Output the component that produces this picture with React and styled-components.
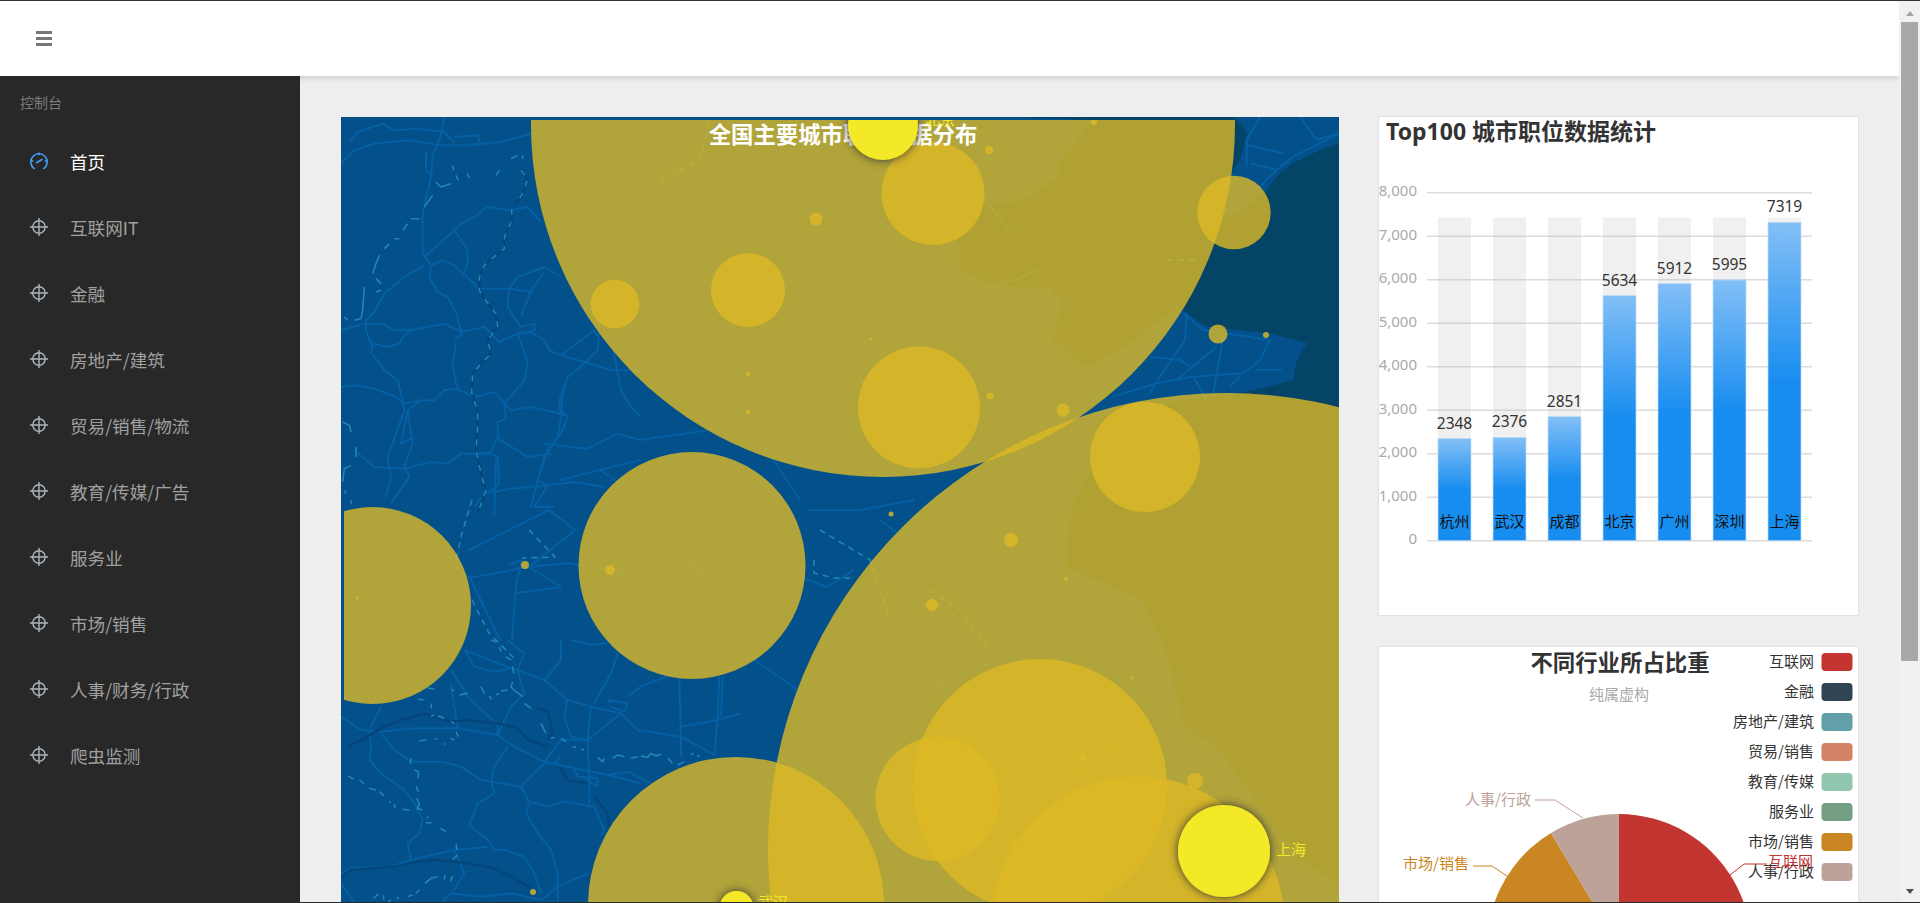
import React from 'react';
import styled, { createGlobalStyle } from 'styled-components';

const cjk = '"Noto Sans CJK SC", "Noto Sans", sans-serif';

const GlobalStyle = createGlobalStyle`
  html, body {
    margin: 0;
    height: 100%;
    overflow: hidden;
    background: #eee;
    font-family: ${cjk};
  }
`;

const Page = styled.div`
  display: flex;
  height: 903px;
  box-sizing: border-box;
  overflow: hidden;
  border-top: 1px solid #333;
  border-bottom: 1px solid #2a2a2a;
`;

const Content = styled.div`
  flex: 1;
  min-width: 0;
  display: flex;
  flex-direction: column;
`;

const Header = styled.header`
  flex: 0 0 75px;
  display: flex;
  align-items: center;
  padding-left: 36px;
  background: #fff;
  box-shadow: 0 2px 6px rgba(0, 0, 0, 0.15);
  position: relative;
  z-index: 2;
`;

const Body = styled.div`
  flex: 1;
  min-height: 0;
  display: flex;
`;

const Sidebar = styled.nav`
  flex: 0 0 300px;
  background: #282828;
  position: relative;
  z-index: 3;
`;

const SideTitle = styled.div`
  padding: 16px 0 0 20px;
  height: 36px;
  font-size: 14px;
  line-height: 20px;
  color: #7d7d7d;
`;

const MenuItem = styled.div`
  height: 66px;
  display: flex;
  align-items: center;
  padding-left: 30px;
  gap: 22px;
  font-size: 17.6px;
  color: ${props => (props.$active ? '#fff' : '#a0a0a0')};
  svg {
    flex: none;
    color: ${props => (props.$active ? '#409eff' : '#aab4bd')};
  }
`;

const Main = styled.main`
  flex: 1;
  min-width: 0;
  display: flex;
  gap: 39px;
  padding: 41px 40px 0 41px;
  overflow: hidden;
`;

const MapPanel = styled.div`
  flex: 0 0 998px;
  height: 786px;
`;

const ChartSvg = styled.svg`
  display: block;
  width: 100%;
  height: 100%;
`;

const Column = styled.div`
  flex: 0 0 481px;
  margin-top: -1px;
  display: flex;
  flex-direction: column;
  gap: 30px;
`;

const Card = styled.section`
  flex: none;
  height: ${props => props.$height}px;
  box-sizing: border-box;
  background: #fff;
  border: 1px solid #e0e2ea;
`;

const Scrollbar = styled.div`
  flex: 0 0 17px;
  display: flex;
  flex-direction: column;
  padding: 0 2px;
  background: #f1f1f1;
  position: relative;
  z-index: 4;
`;

const ScrollTop = styled.div`
  height: 21px;
  display: flex;
  align-items: center;
  justify-content: center;
  &::before {
    content: '';
    border: 4.5px solid transparent;
    border-top: 0;
    border-bottom: 5px solid #a3a3a3;
    margin-top: 4px;
  }
`;

const ScrollThumb = styled.div`
  height: 639px;
  background: #a8a8a8;
`;

const ScrollBottom = styled.div`
  margin-top: auto;
  height: 21px;
  display: flex;
  align-items: center;
  justify-content: center;
  &::before {
    content: '';
    border: 4.5px solid transparent;
    border-bottom: 0;
    border-top: 5px solid #505050;
  }
`;

const MapTitle = styled.text`
  font-family: ${cjk};
  font-size: 22.4px;
  font-weight: 700;
  fill: #fff;
  text-anchor: middle;
`;

const CityLabel = styled.text`
  font-family: ${cjk};
  font-size: 15px;
  fill: #f4e925;
`;

const CardTitle = styled.text`
  font-family: "Noto Sans", ${cjk};
  font-size: ${props => props.$size || 23}px;
  font-weight: 700;
  fill: #333;
  text-anchor: ${props => props.$anchor || 'start'};
`;

const AxisLabel = styled.text`
  font-family: "Noto Sans", ${cjk};
  font-size: 15px;
  fill: #aaa;
  text-anchor: end;
`;

const BarValue = styled.text`
  font-family: "Noto Sans", sans-serif;
  font-size: 15.5px;
  fill: #333;
  text-anchor: middle;
`;

const BarName = styled.text`
  font-family: ${cjk};
  font-size: 15px;
  fill: #111;
  text-anchor: middle;
`;

const SubTitle = styled.text`
  font-family: ${cjk};
  font-size: 15px;
  fill: #aaa;
  text-anchor: middle;
`;

const LegendLabel = styled.text`
  font-family: ${cjk};
  font-size: 15px;
  fill: #333;
  text-anchor: end;
`;

const PieLabel = styled.text`
  font-family: ${cjk};
  font-size: 15px;
  fill: ${props => props.$color};
`;

const menu = ['互联网IT', '金融', '房地产/建筑', '贸易/销售/物流', '教育/传媒/广告', '服务业', '市场/销售', '人事/财务/行政', '爬虫监测'];

const sea = 'M1339,143 L1320,150 L1293,163 L1280,173 L1267,190 L1247,207 L1230,217 L1222,218 L1225,180 L1240,160 L1247,133 L1235,117 L1010,117 L1093,120 L1077,140 L1057,167 L1060,177 L1017,203 L955,200 L960,270 L1000,287 L1050,287 L1063,303 L1053,340 L1087,367 L1123,347 L1177,307 L1207,327 L1267,333 L1307,343 L1297,360 L1293,380 L1267,387 L1240,393 L1180,400 L1120,420 L1075,500 L1068,533 L1066,567 L1142,600 L1166,650 L1185,727 L1219,750 L1249,790 L1279,833 L1312,867 L1339,885 Z';

// traced from the upper left of the map, 3x
const northWestRoads = [
  'M0,140 L40,100 L100,80 L200,70 L300,85 L380,85 L480,75 L570,50 L650,40',
  'M25,75 L50,45 L125,20 L160,40 L230,35 L310,45 L340,75',
  'M310,0 L295,70 L275,115 L270,180 L245,290 L245,410 L270,445',
  'M255,105 L255,160 L275,175',
  'M340,60 L410,55 L415,75',
  'M250,420 L340,340 L360,320 L400,300 L440,270 L510,280 L560,270 L600,315',
  'M340,340 L380,400 L380,440 L365,475',
  'M250,445 L190,480 L130,530 L100,585 L75,610 L75,640 L95,690 L90,705 L130,760 L170,790 L185,850',
  'M0,640 L70,620 L130,622 L160,640 L210,640 L310,620 L360,645 L430,630 L475,675 L530,650 L570,645 L610,670 L625,700 L660,715 L730,735 L810,760 L900,760',
  'M95,680 L140,690 L175,680 L190,655 L210,640',
  'M270,445 L305,430 L340,445 L415,515 L505,515 L575,525',
  'M270,445 L265,480 L290,525 L320,540 L345,585 L360,645',
  'M345,675 L335,740 L345,800 L355,825 M365,650 L340,670',
  'M530,650 L560,735 L550,790 L490,860 L495,905 L470,915 L470,960 L450,1005 L400,1010',
  'M505,515 L500,570 L540,630 L580,620 L580,640 L530,650',
  'M505,515 L530,480 L610,450 L660,480 M540,600 L570,520 L610,465',
  'M660,715 L760,640 L770,660 M730,740 L770,700 L775,640',
  'M730,740 L680,780 L655,850 L660,900 L650,960 L610,1020 L590,1090 L570,1170',
  'M670,800 L660,880 L680,900 L660,950 L620,1000 L600,1060',
  'M0,810 L40,805 L100,815 L165,840 L190,860 L240,850 L280,850 L310,820 L345,815 L400,840 L460,825 L490,860 L510,880 L570,870 L640,885 L670,895',
  'M185,850 L190,880 L140,1020 L150,1080 L135,1140',
  'M200,880 L215,980 L190,1050 L205,1080 L150,1160',
  'M240,850 L200,880 L180,980 L210,965',
  'M40,1000 L100,1050 L190,1055 L270,1035 L320,1040 L360,1010 L450,1010 L470,1020 L475,1100 L440,1130',
  'M470,965 L560,1020 L630,1010',
  'M610,980 L740,995 L830,950 L900,970',
  'M400,1170 L430,1130 L510,1115 L620,1105 L700,1095 L790,1110',
  'M810,660 L840,820 L870,870 L900,900',
  'M590,1090 L620,1105 L580,1170 L640,1170 M465,1030 L460,1200',
  'M620,300 L700,240 L760,230 L860,270 L900,250 M640,100 L720,140 L780,120 L900,160 M700,420 L800,380 L900,400',
];

const northWestBorder = 'M540,160 L560,185 L548,225 L525,260 M512,275 L513,295 L510,315 L490,360 L490,395 L470,410 L430,445 L415,480 L415,520 L430,545 L465,590 L470,630 L440,670 L450,710 L420,740 L395,770 L392,825 L410,885 L410,930 L405,1000 L420,1070 L435,1120 L410,1190';

const northWestDashes = [
  'M285,195 L300,210 L330,200 M275,235 L250,270 M235,305 L210,305 M200,320 L185,340 M175,365 L160,365 M145,380 L130,395 M115,415 L105,440 L95,470 M105,485 L120,500 M120,520 L105,525 M70,510 L65,580 L60,605 L40,610 M20,610 L10,600',
  'M335,145 L338,160 M345,175 L352,190 M378,170 L385,182 M475,160 L465,175 M510,125 L530,115 M545,115 L545,125',
  'M5,915 L25,925 L30,945 M45,990 L45,1020 M30,1045 L10,1055 L5,1095 M10,1120 L15,1130 M30,1150 L30,1160',
];

// traced from the lower left of the map, 3x
const southWestRoads = [
  'M370,30 L500,80 L610,120 L680,180 L750,200 L840,220 L890,270 L1020,290 L1120,345',
  'M0,230 L60,270 L120,275 L220,265 L350,265 L470,285 L520,320 L610,365 L700,385 L800,405 L900,430',
  'M85,270 L90,320 L85,360 L120,400 L190,450 L220,490 L245,540 L235,580 L200,610 L210,660',
  'M120,280 L160,330 L210,365 L300,365 L360,380 L420,420 L540,440 L610,370',
  'M540,440 L565,485 L620,500 L670,485 L760,500 L790,570 L780,590',
  'M565,490 L555,520 L590,580 L630,630 L650,700 L650,789',
  'M450,420 L460,460 L410,490 L385,555 L440,600 L460,630 L490,630 L550,650 L580,700 L600,760',
  'M610,365 L660,300 L740,300 L840,220',
  'M500,320 L460,380 L450,425',
  'M470,250 L470,285 L510,200 L550,160 L530,90 L550,40 L500,0',
  'M330,90 L380,170 L470,255',
  'M370,30 L400,80 L460,95 L510,85',
  'M610,120 L660,60 L660,0 M690,0 L750,15 L800,10',
  'M680,180 L670,230 L690,290 L740,300',
  'M760,190 L810,100 L830,40 M750,200 L740,300 L745,420 L745,490',
  'M810,190 L800,180 L860,190 L850,215 L810,200',
  'M860,170 L900,140 L1000,100 L1020,90 M1015,110 L1020,290 L1020,350 M1020,260 L1130,240 L1200,220 M1135,110 L1130,240 L1120,340 M1145,110 L1140,230',
  'M0,700 L30,685 L150,680 L210,660 L340,630 L440,620',
  'M0,730 L40,789 M300,789 L330,760 L420,770 L510,760 L600,780 L650,740 L740,700',
  'M340,630 L370,700 L340,750',
  'M700,385 L710,410 L770,415 L770,440 L735,420 M660,350 L640,370 L610,370 M800,405 L860,395 L930,430',
  'M120,200 L90,260 M350,265 L330,130',
];

const southWestRivers = [
  'M20,320 L70,295 L120,265 L180,240 L250,220 L330,245 L380,240 L470,250 L530,265 L560,300 L620,320',
  'M590,205 L620,215 L635,280 L620,300',
  'M655,380 L680,420 L740,430 M760,470 L800,520 L805,560',
  'M0,710 L30,690 L160,680 L230,665 L290,660 L380,670 L460,685 L520,715 L570,745',
];

const southWestDashes = [
  'M450,0 L465,5 M475,20 L480,35 M495,50 L510,60 M515,80 L518,100 M515,125 L510,140 L525,155 L545,170 M550,190 L570,205 M600,250 L615,280 M630,295 L640,292 M660,295 L675,305 M695,320 L705,322 M720,330 L730,328 M770,352 L785,365 L790,355 M815,355 L830,345 L850,350 M870,355 L890,350 M900,348 L920,352 L930,340 L945,348 L960,342 M980,355 L995,370 M1010,375 L1030,365 M1050,345 L1058,340 M1070,345 L1075,352',
  'M260,143 L280,148 M330,148 L340,152 M355,165 L380,160 M420,140 L430,160 M445,168 L452,178 M465,165 L475,160 M480,153 L500,150',
  'M230,178 L248,180 M272,190 L270,205 M270,228 L280,225 M290,228 L310,235 M330,245 L340,250 M345,275 L352,290 M328,295 L340,300 M235,302 L255,300 M280,298 L288,296 M310,312 L315,312',
  'M210,355 L208,372 M220,390 L232,395 L232,415 M225,440 L232,455 M228,475 L235,495 L228,505 L245,510 M185,508 L205,510 M160,492 L162,505 M145,485 L150,488 M130,468 L115,455 M105,450 L85,445 M70,432 L55,420 M38,418 L22,408 M258,530 L262,535 M255,548 L272,548 M298,565 L315,575 M345,612 L348,630 M350,645 L335,658 M290,710 L270,715 L252,730 M312,705 L310,718 M335,708 L328,725 M235,750 L225,760 M215,765 L200,770 M170,770 L170,778 M128,765 L128,780 M112,762 L98,775 M150,780 L142,785',
];

// middle band and the parts that show through the big circles, page coordinates
const middleRoads = [
  'M516,593 L561,587 L529,567 L469,578',
  'M529,567 L569,563 L609,570 L701,570 L754,560',
  'M469,550 L549,510 L575,530 L529,567',
  'M509,565 L522,560 L516,585 L512,640',
  'M754,560 L827,587 L854,570 M807,510 L861,510 L914,500',
  'M754,660 L794,687 L821,713 L861,717',
  'M344,530 L420,540 L470,578 L500,640',
  'M600,540 L640,600 L700,640 M640,520 L690,560 L730,640',
  'M600,470 L660,510 L700,570 M560,480 L640,460',
  'M660,300 L720,380 L760,440 L800,500',
  'M730,350 L810,400 L860,380 L950,420 L1000,370',
  'M640,440 L780,420 L820,450 L900,440',
  'M770,120 L860,180 L950,160 L1010,230',
  'M680,220 L760,200 L840,260 L960,300 L1040,270',
  'M880,520 L960,580 L1030,560 L1090,640 L1150,680',
  'M820,660 L900,640 L980,720 L1060,700',
  'M890,760 L940,680 L1000,660 L1040,760 L1120,800',
  'M800,860 L880,820 L960,860 L1080,880',
];

const middleDashes = [
  'M472,500 L462,533 L456,560 M472,600 L489,633 L516,660',
  'M529,530 L555,557 L522,558 M814,560 L814,573 L834,578 L854,578',
  'M660,180 L700,160 L710,120 M820,530 L870,560 L890,620 M930,590 L960,610 L990,650',
  'M1167,260 L1197,260',
];

const peninsulaRoads = [
  'M1017,100 L940,140 L880,170 L830,210 L780,260 L720,300 L680,330',
  'M780,50 L740,120 L740,200 M740,135 L850,160 M900,50 L950,120 L1017,100 M750,190 L830,210',
  'M550,640 L610,690 L810,720 L780,780 L730,820 L580,830 L470,850 L340,890',
  'M560,640 L555,720 L480,830 L450,880 M650,740 L530,840 M668,720 L640,880 M720,830 L690,860 M580,830 L620,900 M450,770 L540,780 L570,800 M770,810 L845,810',
];

const bubbles = [
  [883, 125, 352], [1226, 851, 458], [372.5, 605.5, 98.5], [692, 565.5, 113.5], [736, 905, 148],
  [1040, 786, 127], [937.5, 799, 62], [1138, 923, 146.5], [933, 193.5, 51.5], [1234, 212.5, 36.7],
  [748, 290, 37], [615, 304, 24.3], [919, 407.5, 61], [1145, 457, 55],
  [1218, 334, 9.5], [1266, 335, 3], [1063, 410, 6.5], [1094, 122, 3], [816, 219, 6.5], [989, 150, 4],
  [871, 339, 1.5], [748, 374, 2], [748, 412, 2], [990, 396, 3.5], [891, 514, 2.5], [525, 565, 4],
  [610, 570, 5], [1011, 540, 7], [932, 605, 6], [1066, 579, 2], [357, 598, 1.5], [1132, 678, 1.5],
  [1083, 757, 3.5], [1085, 773, 2.5], [1195, 781, 8], [533, 892, 3], [1013, 842, 3], [1117, 749, 1.5],
];

const bars = [
  ['杭州', 2348], ['武汉', 2376], ['成都', 2851], ['北京', 5634], ['广州', 5912], ['深圳', 5995], ['上海', 7319],
];

const ticks = ['0', '1,000', '2,000', '3,000', '4,000', '5,000', '6,000', '7,000', '8,000'];

const legend = [
  ['互联网', '#c23531'], ['金融', '#2f4554'], ['房地产/建筑', '#61a0a8'], ['贸易/销售', '#d48265'],
  ['教育/传媒', '#91c7ae'], ['服务业', '#749f83'], ['市场/销售', '#ca8622'], ['人事/行政', '#bda29a'],
];

const MenuIcon = () => (
  <svg width="18" height="18" viewBox="0 0 18 18" fill="none" stroke="currentColor" strokeWidth="1.4">
    <circle cx="9" cy="9" r="6.2" />
    <path d="M9 0v18M0 9h18" />
  </svg>
);

const DashIcon = () => (
  <svg width="18" height="18" viewBox="0 0 18 18" fill="none" stroke="currentColor" strokeWidth="1.6" strokeLinecap="round">
    <path d="M4.2 16.6A8.2 8.2 0 1 1 13.8 16.6" />
    <path d="M9 1v1.5M1.7 9h1M15.3 9h1M6.5 10.7l5.5-3.2" />
  </svg>
);

const Lines = ({ paths, ...rest }) => (
  <g {...rest}>
    {paths.map(d => <path key={d} d={d} vectorEffect="non-scaling-stroke" />)}
  </g>
);

const MapChart = () => (
  <ChartSvg viewBox="341 117 998 786">
    <defs>
      <clipPath id="canvasClip"><rect x="344" y="120" width="995" height="783" /></clipPath>
      <filter id="glow" x="-40%" y="-40%" width="180%" height="180%">
        <feDropShadow dx="0" dy="0" stdDeviation="5" floodColor="#333" />
      </filter>
    </defs>
    <rect x="341" y="117" width="998" height="786" fill="#03508b" />
    <path d={sea} fill="#044467" />
    <g fill="none" stroke="#0561a3" strokeWidth="2" strokeLinejoin="round">
      <Lines paths={middleRoads} />
      <Lines paths={northWestRoads} transform="translate(341 117) scale(.3333)" />
      <Lines paths={southWestRoads} transform="translate(341 640) scale(.3333)" />
      <Lines paths={peninsulaRoads} transform="translate(1000 100) scale(.3333)" />
      <Lines paths={southWestRivers} transform="translate(341 640) scale(.3333)" stroke="#04467a" strokeWidth="2.5" />
      <Lines paths={[northWestBorder]} transform="translate(341 117) scale(.3333)" stroke="#04467a" strokeWidth="2.5" />
      <g stroke="#2289b5" strokeWidth="1.5">
        <Lines paths={[northWestBorder]} transform="translate(341 117) scale(.3333)" strokeDasharray="6 7" />
        <Lines paths={northWestDashes} transform="translate(341 117) scale(.3333)" />
        <Lines paths={southWestDashes} transform="translate(341 640) scale(.3333)" />
        <Lines paths={middleDashes} strokeDasharray="6 5" />
      </g>
    </g>
    <g clipPath="url(#canvasClip)">
      {bubbles.map(([cx, cy, r]) => <circle key={`${cx}-${cy}`} cx={cx} cy={cy} r={r} fill="#ddb926" fillOpacity=".8" />)}
      <MapTitle x="843" y="143">全国主要城市职位数据分布</MapTitle>
      <circle cx="883" cy="125" r="35" fill="#f4e925" filter="url(#glow)" />
      <circle cx="1224" cy="851" r="46" fill="#f4e925" filter="url(#glow)" />
      <circle cx="736.5" cy="908" r="17" fill="#f4e925" filter="url(#glow)" />
      <CityLabel x="925" y="125">北京</CityLabel>
      <CityLabel x="1276" y="855">上海</CityLabel>
      <CityLabel x="758" y="908">武汉</CityLabel>
    </g>
  </ChartSvg>
);

const BarChart = () => (
  <ChartSvg viewBox="1379 117 479 498">
    <defs>
      <linearGradient id="barFill" x1="0" y1="0" x2="0" y2="1">
        <stop offset="0" stopColor="#83bff6" />
        <stop offset=".5" stopColor="#188df0" />
        <stop offset="1" stopColor="#188df0" />
      </linearGradient>
    </defs>
    <CardTitle x="1386" y="140">Top100 城市职位数据统计</CardTitle>
    {ticks.map((t, i) => (
      <g key={t}>
        <line x1="1427" x2="1812" y1={540.7 - i * 43.5} y2={540.7 - i * 43.5} stroke="#dcdcdc" strokeWidth="1.6" />
        <AxisLabel x="1417" y={544.2 - i * 43.5}>{t}</AxisLabel>
      </g>
    ))}
    {bars.map(([name, value], i) => {
      const x = 1438 + i * 55;
      const h = value * 0.0435;
      return (
        <g key={name}>
          <rect x={x} y="217.5" width="33" height="323" fill="#b4b4b4" fillOpacity=".2" />
          <rect x={x} y={540.7 - h} width="33" height={h} fill="url(#barFill)" stroke="#bcdcf8" strokeWidth=".7" />
          <BarValue x={x + 16.5} y={540.7 - h - 10}>{value}</BarValue>
          <BarName x={x + 16.5} y="527">{name}</BarName>
        </g>
      );
    })}
  </ChartSvg>
);

const PieChart = () => (
  <ChartSvg viewBox="1379 647 479 298">
    <CardTitle $anchor="middle" $size={22.4} x="1620" y="671">不同行业所占比重</CardTitle>
    <SubTitle x="1619" y="700">纯属虚构</SubTitle>
    <path d="M1619 946 V814 A132 132 0 0 1 1733.3 1012 Z" fill="#c23531" />
    <path d="M1619 946 L1551 833 A132 132 0 0 0 1504.7 1012 Z" fill="#ca8622" />
    <path d="M1619 946 V814 A132 132 0 0 0 1551 833 Z" fill="#bda29a" />
    <polyline points="1535,800 1555,800 1583,818" fill="none" stroke="#bda29a" />
    <polyline points="1473,866 1492,866 1507,876" fill="none" stroke="#ca8622" />
    <polyline points="1730,875 1744,864 1767,864" fill="none" stroke="#c23531" />
    <PieLabel $color="#bda29a" x="1465" y="805">人事/行政</PieLabel>
    <PieLabel $color="#ca8622" x="1403" y="869">市场/销售</PieLabel>
    {legend.map(([name, color], i) => (
      <g key={name}>
        <LegendLabel x="1814" y={667 + i * 30}>{name}</LegendLabel>
        <rect x="1821.5" y={653 + i * 30} width="31" height="18" rx="4" fill={color} />
      </g>
    ))}
    <PieLabel $color="#c23531" x="1768" y="867">互联网</PieLabel>
  </ChartSvg>
);

export default function App() {
  return (
    <>
      <GlobalStyle />
      <Page>
        <Content>
          <Header>
            <svg width="16" height="15" viewBox="0 0 16 15" fill="#777">
              <rect y="0" width="16" height="3" />
              <rect y="6" width="16" height="3" />
              <rect y="12" width="16" height="3" />
            </svg>
          </Header>
          <Body>
            <Sidebar>
              <SideTitle>控制台</SideTitle>
              <MenuItem $active><DashIcon />首页</MenuItem>
              {menu.map(name => <MenuItem key={name}><MenuIcon />{name}</MenuItem>)}
            </Sidebar>
            <Main>
              <MapPanel><MapChart /></MapPanel>
              <Column>
                <Card $height={500}><BarChart /></Card>
                <Card $height={300}><PieChart /></Card>
              </Column>
            </Main>
          </Body>
        </Content>
        <Scrollbar>
          <ScrollTop />
          <ScrollThumb />
          <ScrollBottom />
        </Scrollbar>
      </Page>
    </>
  );
}
